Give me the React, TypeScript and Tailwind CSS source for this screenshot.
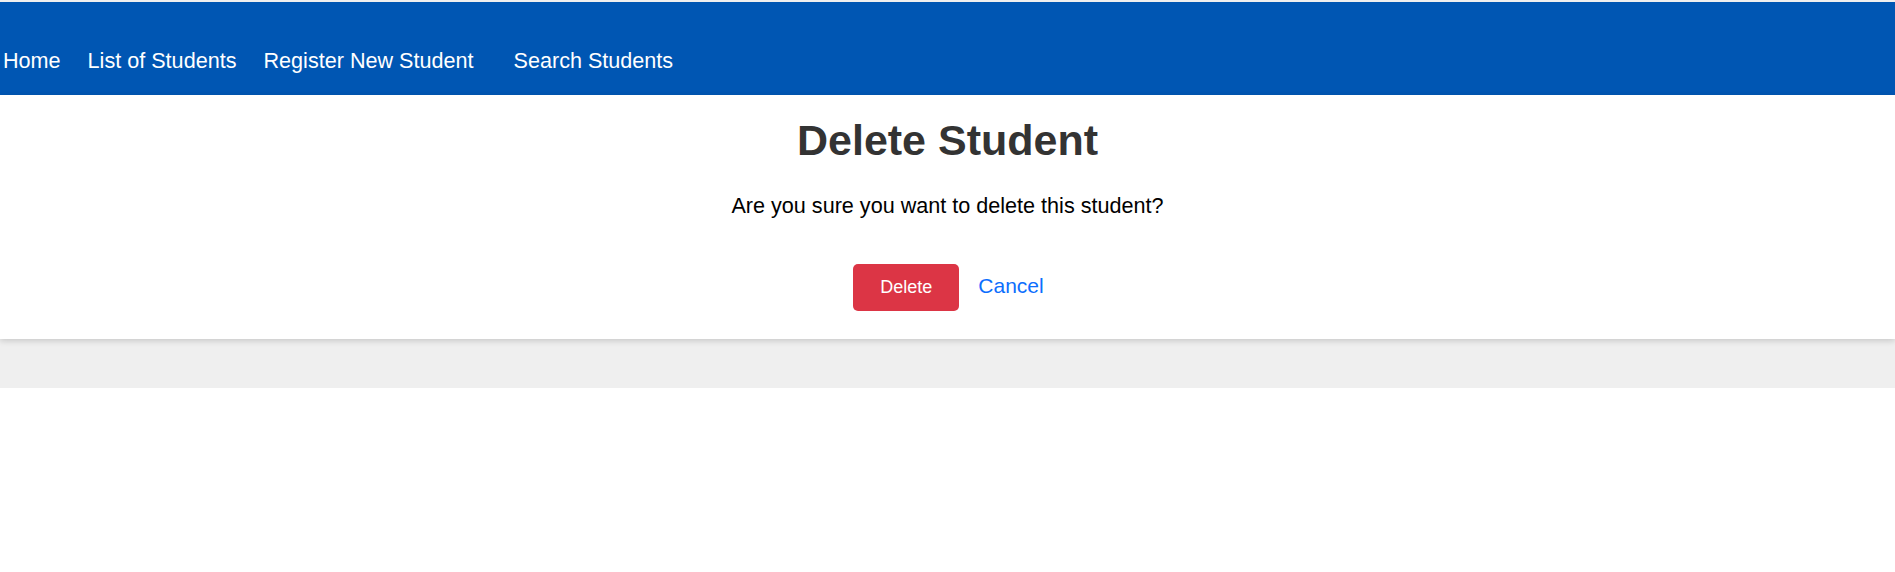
const navItems = ["Home", "List of Students", "Register New Student"];

const App = () => {
    return (
        <div className="bg-[#efefef] pt-[2px] font-['Liberation_Sans',Arial,sans-serif]">
            {/* Header */}
            <header className="bg-[#0056b3] h-[93px] text-white">
                <nav className="flex items-start pt-[46px] pl-[3px] text-[21.6px] leading-[25px]">
                    {navItems.map((item) => (
                        <a key={item} href="#" className="mr-[27px] whitespace-nowrap">
                            {item}
                        </a>
                    ))}
                    <a href="#" className="ml-[13px] whitespace-nowrap">Search Students</a>
                </nav>
            </header>

            {/* Contenido */}
            <main className="bg-white shadow-[0_2px_6px_rgba(0,0,0,0.16)] pt-[21px] pb-[28px] flex flex-col items-center">
                <h1 className="text-[43px] leading-[49.5px] font-bold text-[#333]">Delete Student</h1>
                <p className="mt-[27px] text-[21.6px] leading-[25px] text-black">
                    Are you sure you want to delete this student?
                </p>
                <div className="mt-[46px] flex items-center gap-[19px] pl-[2px]">
                    <button className="bg-[#dc3545] text-white text-[18px] w-[106px] h-[47px] rounded-[5px] flex items-center justify-center">
                        Delete
                    </button>
                    <a href="#" className="text-[#0d6efd] text-[21px] leading-[25px] -mt-[4px]">Cancel</a>
                </div>
            </main>

            <div className="h-[49px]" />
        </div>
    );
};

export default App;
